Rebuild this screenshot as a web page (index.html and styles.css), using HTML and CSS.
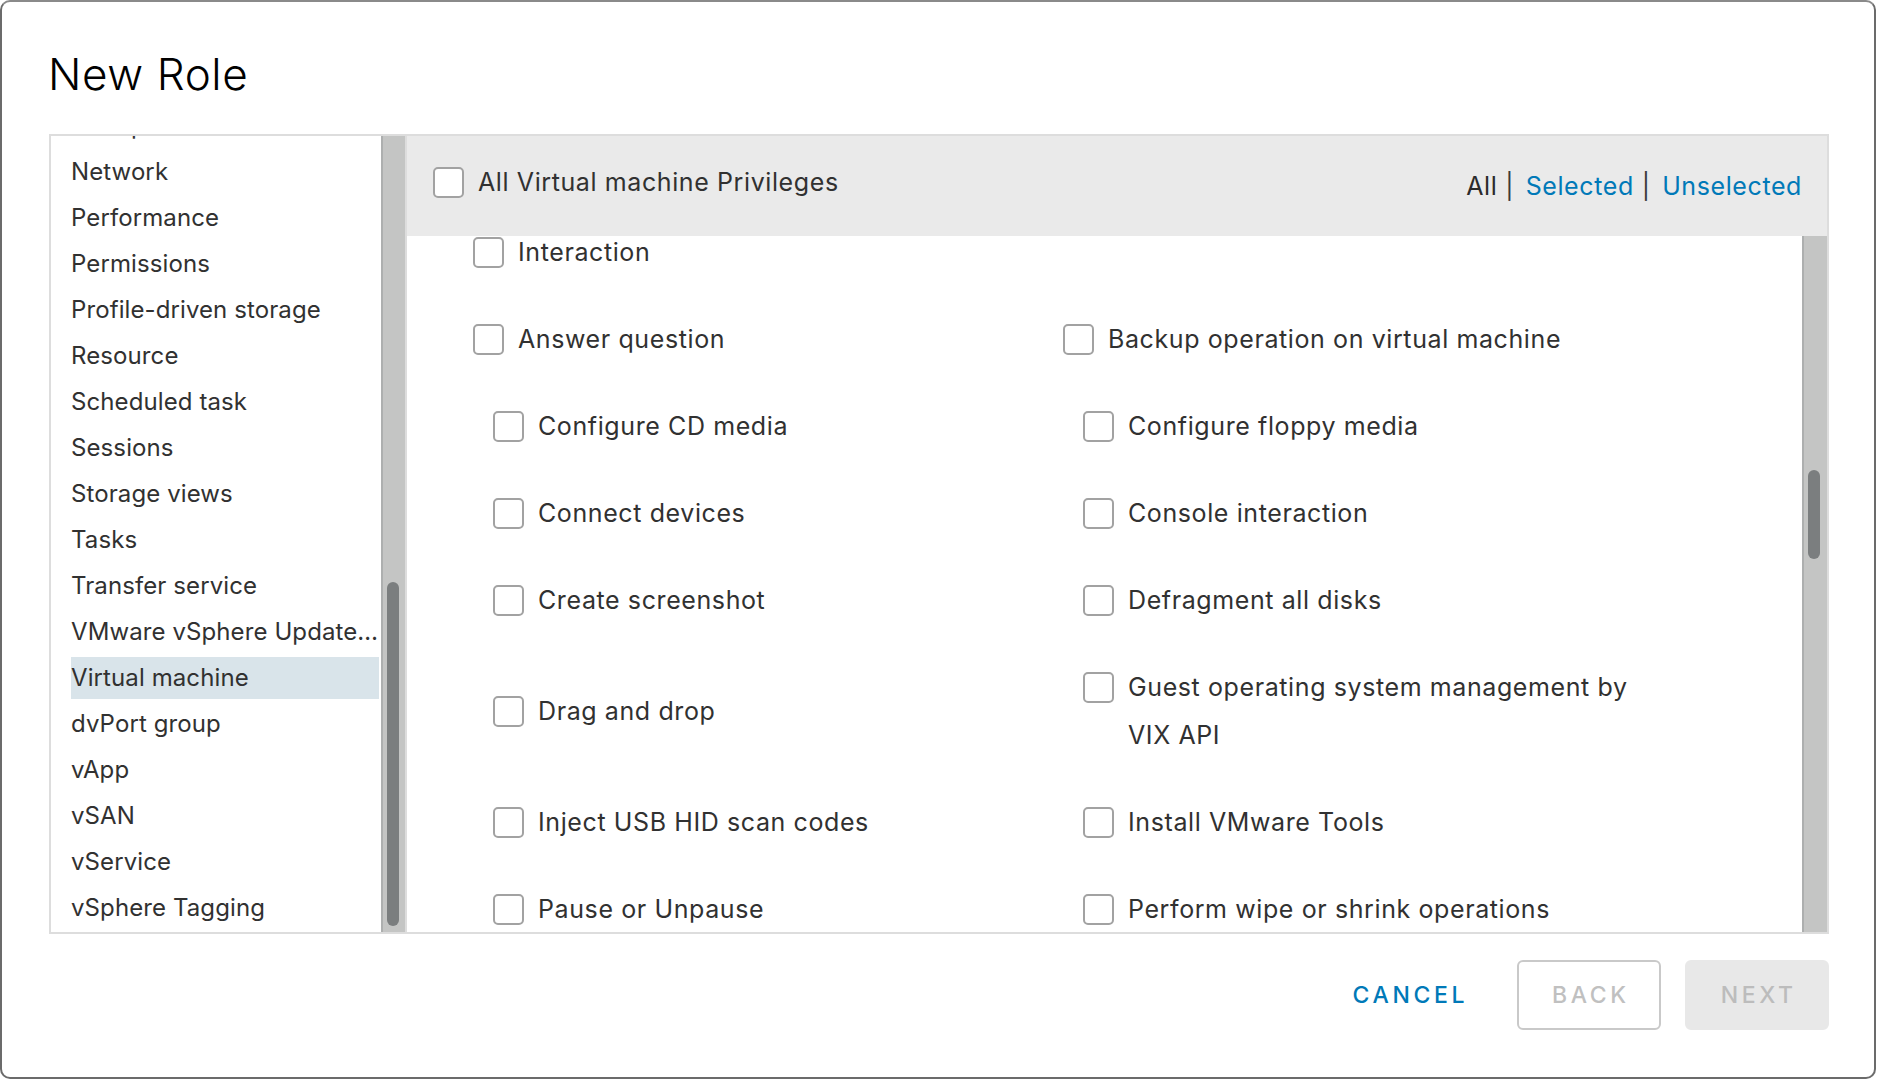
FILE: index.html
```html
<!DOCTYPE html>
<html lang="en">
<head>
<meta charset="utf-8">
<title>New Role</title>
<link rel="stylesheet" href="styles.css">
</head>
<body>
<div class="dialog">
  <h1 class="title">New Role</h1>
  <div class="panel">
    <div class="cats">
      <ul class="cat-list">
        <li class="cat">Host profile</li>
        <li class="cat">Network</li>
        <li class="cat">Performance</li>
        <li class="cat">Permissions</li>
        <li class="cat">Profile-driven storage</li>
        <li class="cat">Resource</li>
        <li class="cat">Scheduled task</li>
        <li class="cat">Sessions</li>
        <li class="cat">Storage views</li>
        <li class="cat">Tasks</li>
        <li class="cat">Transfer service</li>
        <li class="cat">VMware vSphere Update Manager</li>
        <li class="cat cat-active">Virtual machine</li>
        <li class="cat">dvPort group</li>
        <li class="cat">vApp</li>
        <li class="cat">vSAN</li>
        <li class="cat">vService</li>
        <li class="cat">vSphere Tagging</li>
      </ul>
    </div>
    <div class="track track-left"><div class="thumb"></div></div>
    <div class="privs">
      <div class="privs-head">
        <div class="head-check"><span class="box"></span><span class="head-lbl">All Virtual machine Privileges</span></div>
        <div class="filter"><span class="filter-all">All</span><span class="sep">|</span><span class="link">Selected</span><span class="sep">|</span><span class="link">Unselected</span></div>
      </div>
      <div class="privs-body">
        <div class="privs-view">
          <div class="privs-scroll">
            <div class="priv group-head"><span class="box"></span><span class="lbl">Interaction</span></div>
            <div class="priv-grid">
              <div class="priv first"><span class="box"></span><span class="lbl">Answer question</span></div>
              <div class="priv first"><span class="box"></span><span class="lbl">Backup operation on virtual machine</span></div>
              <div class="priv"><span class="box"></span><span class="lbl">Configure CD media</span></div>
              <div class="priv"><span class="box"></span><span class="lbl">Configure floppy media</span></div>
              <div class="priv"><span class="box"></span><span class="lbl">Connect devices</span></div>
              <div class="priv"><span class="box"></span><span class="lbl">Console interaction</span></div>
              <div class="priv"><span class="box"></span><span class="lbl">Create screenshot</span></div>
              <div class="priv"><span class="box"></span><span class="lbl">Defragment all disks</span></div>
              <div class="priv"><span class="box"></span><span class="lbl">Drag and drop</span></div>
              <div class="priv"><span class="box"></span><span class="lbl">Guest operating system management by VIX API</span></div>
              <div class="priv"><span class="box"></span><span class="lbl">Inject USB HID scan codes</span></div>
              <div class="priv"><span class="box"></span><span class="lbl">Install VMware Tools</span></div>
              <div class="priv"><span class="box"></span><span class="lbl">Pause or Unpause</span></div>
              <div class="priv"><span class="box"></span><span class="lbl">Perform wipe or shrink operations</span></div>
              <div class="priv"><span class="box"></span><span class="lbl">Power off</span></div>
              <div class="priv"><span class="box"></span><span class="lbl">Power on</span></div>
            </div>
          </div>
        </div>
        <div class="track track-right"><div class="thumb"></div></div>
      </div>
    </div>
  </div>
  <div class="footer">
    <button class="btn btn-flat" type="button">CANCEL</button>
    <button class="btn btn-outline" type="button" disabled>BACK</button>
    <button class="btn btn-solid" type="button" disabled>NEXT</button>
  </div>
</div>
</body>
</html>
```

FILE: styles.css
```css
* { box-sizing: border-box; }

html, body {
  margin: 0;
  padding: 0;
  background: #ffffff;
  overflow: hidden;
}

body {
  font-family: Inter, "Noto Sans", "DejaVu Sans", sans-serif;
  color: #313131;
  width: 1880px;
  height: 1080px;
}

.dialog {
  width: 1876px;
  height: 1079px;
  background: #ffffff;
  border: 2px solid #6b6b6b;
  border-top-color: #8a8a8a;
  border-radius: 10px;
  padding: 50px 45px 47px 47px;
  display: flex;
  flex-direction: column;
}

.title {
  margin: 0 0 38px -1px;
  font-size: 44px;
  line-height: 44px;
  height: 44px;
  font-weight: 300;
  color: #000000;
  letter-spacing: 0.6px;
}

.panel {
  height: 800px;
  border: 2px solid #dddddd;
  display: flex;
  flex: none;
}

/* left category list */
.cats {
  width: 330px;
  flex: none;
  overflow: hidden;
}

.cat-list {
  list-style: none;
  margin: -31px 0 0 0;
  padding: 0 2px 0 20px;
}

.cat {
  height: 42px;
  line-height: 42px;
  margin-bottom: 4px;
  font-size: 24px;
  letter-spacing: 0.1px;
  white-space: nowrap;
  overflow: hidden;
  text-overflow: ellipsis;
  color: #313131;
}

.cat-active {
  background: #d9e4ea;
}

/* scrollbars */
.track {
  flex: none;
  position: relative;
  background: #c4c5c4;
  border-left: 2px solid #adafaf;
}

.track-left {
  width: 24px;
}

.track-right {
  width: 25px;
}

.thumb {
  position: absolute;
  left: 4px;
  width: 12px;
  border-radius: 6px;
  background: #7b7e7f;
}

.track-left .thumb {
  top: 446px;
  height: 344px;
}

.track-right .thumb {
  top: 234px;
  height: 89px;
}

/* privileges */
.privs {
  flex: 1;
  min-width: 0;
  border-left: 2px solid #dddddd;
  display: flex;
  flex-direction: column;
  font-size: 25px;
  letter-spacing: 0.6px;
}

.privs-head {
  height: 100px;
  flex: none;
  background: #eaeaea;
  display: flex;
  align-items: center;
  justify-content: space-between;
  padding: 0 25px 0 26px;
}

.head-check {
  display: flex;
  align-items: center;
  gap: 14px;
  margin-bottom: 8px;
}

.head-lbl {
  line-height: 31px;
  color: #313131;
}

.filter {
  display: flex;
  align-items: center;
  line-height: 31px;
}

.filter-all {
  color: #2b2b2b;
}

.sep {
  color: #3a3a3a;
  margin: 0 12px 0 8px;
  letter-spacing: 0;
}

.link {
  color: #0079b8;
}

.privs-body {
  flex: 1;
  min-height: 0;
  display: flex;
}

.privs-view {
  flex: 1;
  min-width: 0;
  overflow: hidden;
  background: #ffffff;
}

.privs-scroll {
  margin-top: -27.5px;
  padding-left: 66px;
}

.box {
  flex: none;
  width: 31px;
  height: 31px;
  border: 2px solid #a2a2a2;
  border-radius: 5px;
  background: #ffffff;
}

.priv {
  display: flex;
  align-items: flex-start;
  gap: 14px;
  padding: 19.5px 0;
  margin-left: 20px;
  align-self: center;
}

.priv .box {
  margin-top: 8.5px;
}

.priv.first,
.priv.group-head {
  margin-left: 0;
}

.lbl {
  line-height: 48px;
  color: #313131;
  max-width: 525px;
}

.priv-grid {
  display: grid;
  grid-template-columns: 590px 590px;
}

/* footer */
.footer {
  margin-top: 26px;
  height: 70px;
  flex: none;
  display: flex;
  justify-content: flex-end;
  align-items: center;
}

.btn {
  height: 70px;
  min-width: 144px;
  padding: 0 28px 0 31.6px;
  border-radius: 6px;
  font-family: Inter, "Noto Sans", sans-serif;
  font-size: 23px;
  font-weight: 500;
  letter-spacing: 3.6px;
  border: 2px solid transparent;
  background: transparent;
}

.btn-flat {
  color: #0079b8;
  margin-right: 19px;
}

.btn-outline {
  color: #c0c0c0;
  border-color: #c9c9c9;
  background: #ffffff;
  margin-right: 24px;
}

.btn-solid {
  color: #bcbcbc;
  background: #e8e8e8;
  border-color: #e8e8e8;
}
```
